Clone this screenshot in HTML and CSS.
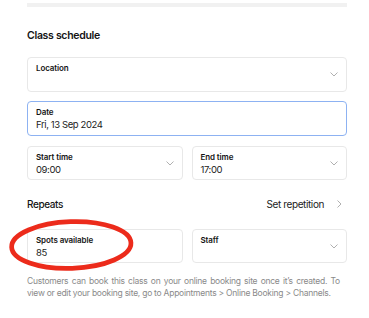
FILE: index.html
```html
<!DOCTYPE html>
<html lang="en">
<head>
    <meta charset="UTF-8">
    <meta name="viewport" content="width=device-width, initial-scale=1.0">
    <title>Class schedule</title>
    <link rel="stylesheet" href="styles.css">
</head>
<body>
    <div class="page">
        <div class="top-bar"></div>

        <h2 class="section-title">Class schedule</h2>

        <div class="field field-tall">
            <div class="field-text">
                <div class="field-label">Location</div>
                <div class="field-value"></div>
            </div>
            <svg class="chevron" width="8" height="5" viewBox="0 0 8 5"><path d="M0.5 0.5 L4 4 L7.5 0.5" fill="none" stroke="#b0b0b0" stroke-width="1"/></svg>
        </div>

        <div class="field field-tall field-active">
            <div class="field-text">
                <div class="field-label">Date</div>
                <div class="field-value">Fri, 13 Sep 2024</div>
            </div>
        </div>

        <div class="row">
            <div class="field">
                <div class="field-text">
                    <div class="field-label">Start time</div>
                    <div class="field-value">09:00</div>
                </div>
                <svg class="chevron" width="8" height="5" viewBox="0 0 8 5"><path d="M0.5 0.5 L4 4 L7.5 0.5" fill="none" stroke="#b0b0b0" stroke-width="1"/></svg>
            </div>
            <div class="field">
                <div class="field-text">
                    <div class="field-label">End time</div>
                    <div class="field-value">17:00</div>
                </div>
                <svg class="chevron" width="8" height="5" viewBox="0 0 8 5"><path d="M0.5 0.5 L4 4 L7.5 0.5" fill="none" stroke="#b0b0b0" stroke-width="1"/></svg>
            </div>
        </div>

        <div class="repeats">
            <span class="repeats-title">Repeats</span>
            <span class="repeats-link">Set repetition
                <svg class="arrow" width="5" height="8" viewBox="0 0 5 8"><path d="M0.5 0.5 L4 4 L0.5 7.5" fill="none" stroke="#b0b0b0" stroke-width="1"/></svg>
            </span>
        </div>

        <div class="row">
            <div class="field">
                <div class="field-text">
                    <div class="field-label">Spots available</div>
                    <div class="field-value">85</div>
                </div>
            </div>
            <div class="field">
                <div class="field-text">
                    <div class="field-label">Staff</div>
                    <div class="field-value"></div>
                </div>
                <svg class="chevron" width="8" height="5" viewBox="0 0 8 5"><path d="M0.5 0.5 L4 4 L7.5 0.5" fill="none" stroke="#b0b0b0" stroke-width="1"/></svg>
            </div>
        </div>

        <p class="help"><span class="help-first">Customers can book this class on your online booking site once it’s created. To</span><br>view or edit your booking site, go to Appointments &gt; Online Booking &gt; Channels.</p>

        <svg class="highlight" width="128" height="56" viewBox="0 0 128 56"><ellipse cx="63.3" cy="27" rx="59.7" ry="23.3" fill="none" stroke="#ec2b1b" stroke-width="4.7" transform="rotate(-2 63.3 27)"/></svg>
    </div>
</body>
</html>
```

FILE: styles.css
```css
body {
    margin: 0;
    padding: 0;
    background-color: #ffffff;
    color: #141414;
    font-family: 'Inter', sans-serif;
}

.page {
    position: relative;
    width: 320px;
    padding: 3px 22px 0 27px;
}

.top-bar {
    height: 4px;
    background-color: #f1f1f1;
}

.section-title {
    font-size: 10.5px;
    font-weight: 600;
    letter-spacing: -0.3px;
    line-height: 14px;
    margin: 22px 0 14px;
}

.field {
    display: flex;
    align-items: center;
    box-sizing: border-box;
    height: 34px;
    border: 1px solid #e8e8e8;
    border-radius: 4px;
    padding: 0 8px;
}

.field-tall {
    height: 35px;
    margin-bottom: 9px;
}

.field-active {
    border-color: #8db2f2;
    margin-bottom: 10px;
}

.field-text {
    flex: 1;
    align-self: flex-start;
    padding-top: 5px;
}

.field-label {
    font-size: 8px;
    font-weight: 600;
    letter-spacing: -0.1px;
    line-height: 10px;
}

.field-value {
    font-size: 9.5px;
    letter-spacing: -0.4px;
    line-height: 12px;
    margin-top: 1.5px;
    color: #222222;
}

.row {
    display: flex;
    gap: 9px;
}

.row .field {
    flex: 1;
}

.repeats {
    display: flex;
    justify-content: space-between;
    align-items: center;
    margin: 17px 0 18px;
    font-size: 10px;
    letter-spacing: -0.4px;
    line-height: 14px;
}

.repeats-title {
    font-weight: 500;
}

.repeats-link {
    display: flex;
    align-items: center;
    gap: 13px;
    color: #222222;
    padding-right: 5px;
}

.help {
    margin: 11.5px 0 0;
    font-size: 8.5px;
    letter-spacing: -0.25px;
    line-height: 12.5px;
    color: #8a8a8a;
    white-space: nowrap;
}

.help-first {
    word-spacing: 1.2px;
}

.highlight {
    position: absolute;
    left: 8px;
    top: 218px;
}
```
